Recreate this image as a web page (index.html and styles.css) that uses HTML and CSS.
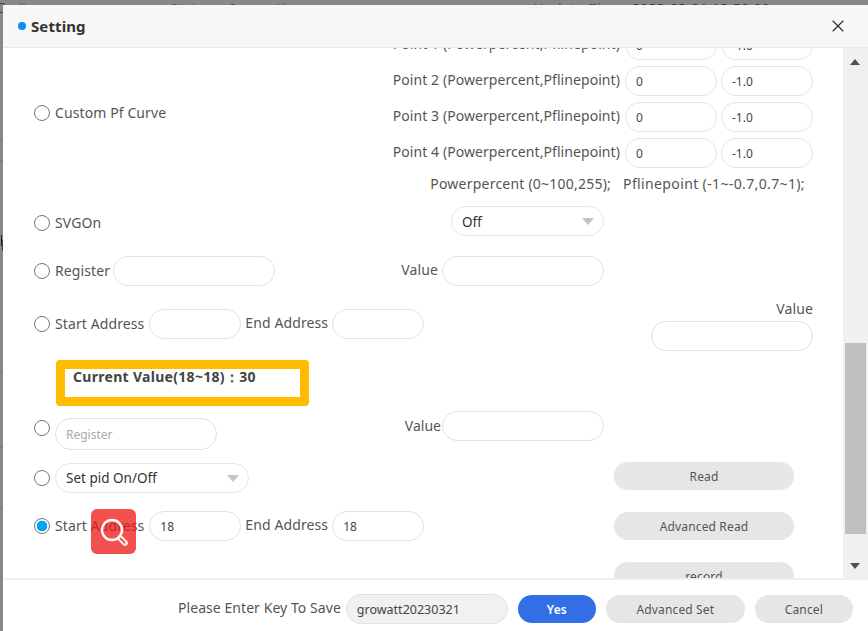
FILE: index.html
```html
<!DOCTYPE html>
<html lang="en">
<head>
<meta charset="utf-8">
<title>Setting</title>
<link rel="stylesheet" href="styles.css">
</head>
<body>
<div class="backdrop">
  <span class="bg-text bg-status">Status:</span>
  <span class="bg-text bg-conn">Connection</span>
  <span class="bg-text bg-update">Update Time:</span>
  <span class="bg-text bg-date">2023-03-21 13:50:00</span>
  <span class="bg-ring bg-ring-a"></span>
  <span class="bg-ring bg-ring-b"></span>
  <span class="bg-line bg-l1"></span>
  <span class="bg-line bg-l2"></span>
  <span class="bg-line bg-l3"></span>
  <span class="bg-line bg-l4"></span>
  <span class="bg-line bg-l5"></span>
  <span class="bg-glyph"></span>
</div>
<section class="modal">
  <header class="modal-head">
    <span class="dot"></span>
    <h1 class="title">Setting</h1>
    <svg class="close" viewBox="0 0 12 12" width="12" height="12"><path d="M.7.7l10.6 10.6M11.3.7L.7 11.3" fill="none" stroke="#333" stroke-width="1.3"/></svg>
  </header>
  <div class="modal-body">
    <div class="pane">
      <div class="content">
        <div class="row row-pf">
          <label class="opt"><input class="radio" type="radio" name="m"><span class="up1">Custom Pf Curve</span></label>
          <div class="points">
            <div class="point"><span>Point 1 (Powerpercent,Pflinepoint)</span><input class="field short" value="0"><input class="field short" value="-1.0"></div>
            <div class="point"><span>Point 2 (Powerpercent,Pflinepoint)</span><input class="field short" value="0"><input class="field short" value="-1.0"></div>
            <div class="point"><span>Point 3 (Powerpercent,Pflinepoint)</span><input class="field short" value="0"><input class="field short" value="-1.0"></div>
            <div class="point"><span>Point 4 (Powerpercent,Pflinepoint)</span><input class="field short" value="0"><input class="field short" value="-1.0"></div>
            <div class="note"><span class="note-a">Powerpercent (0~100,255);</span><span class="note-b">Pflinepoint (-1~-0.7,0.7~1);</span></div>
          </div>
        </div>

        <div class="row row-svg">
          <label class="opt"><input class="radio" type="radio" name="m"><span class="up1">SVGOn</span></label>
          <div class="select select-off"><span>Off</span></div>
        </div>

        <div class="row row-reg">
          <label class="opt"><input class="radio" type="radio" name="m"><span class="up1">Register</span><input class="field long"></label>
          <div class="pair"><span>Value</span><input class="field long"></div>
        </div>

        <div class="row row-addr">
          <label class="opt opt-addr"><input class="radio" type="radio" name="m"><span class="up1">Start Address</span><input class="field short"><span class="up2">End Address</span><input class="field short"></label>
          <div class="value-col"><span>Value</span><input class="field long"></div>
        </div>

        <div class="current"><strong>Current Value(18~18)：30</strong></div>

        <div class="split">
          <div class="left">
            <div class="row row-write">
              <div class="opt opt-write"><input class="radio" type="radio" name="m"><input class="field long tall" placeholder="Register"></div>
              <div class="pair pair-tight"><span>Value</span><input class="field long"></div>
            </div>
            <div class="opt row-pid"><input class="radio" type="radio" name="m"><div class="select select-pid"><span>Set pid On/Off</span></div></div>
            <div class="opt row-start"><input class="radio" type="radio" name="m" checked><span class="up1">Start Address</span><input class="field short" value="18"><span class="up2">End Address</span><input class="field short" value="18"></div>
          </div>
          <div class="actions">
            <button class="btn btn-side" type="button">Read</button>
            <button class="btn btn-side" type="button">Advanced Read</button>
            <button class="btn btn-side" type="button">record</button>
          </div>
        </div>
      </div>
    </div>
    <div class="scrollbar">
      <span class="arrow arrow-up"></span>
      <span class="thumb"></span>
      <span class="arrow arrow-down"></span>
    </div>
  </div>
  <footer class="modal-foot">
    <span>Please Enter Key To Save</span>
    <input class="field key" value="growatt20230321">
    <button class="btn btn-yes" type="button">Yes</button>
    <button class="btn btn-adv" type="button">Advanced Set</button>
    <button class="btn btn-cancel" type="button">Cancel</button>
  </footer>
</section>
<div class="search-badge">
  <svg viewBox="0 0 45 45" width="45" height="45"><circle cx="21" cy="21" r="10" fill="none" stroke="#fff" stroke-width="2.400"/><path d="M29 29l5 5" stroke="#fff" stroke-width="5.500" stroke-linecap="round"/><path d="M29.500 29.500l4.200 4.200" stroke="#f35052" stroke-width="2" stroke-linecap="round"/></svg>
</div>
</body>
</html>
```
FILE: styles.css
```css
* { box-sizing: border-box; }
html, body { margin: 0; height: 100%; overflow: hidden; }
body {
  background: #888;
  font-family: "Noto Sans", "Open Sans", sans-serif;
  font-size: 14px;
  letter-spacing: .1px;
  color: #555;
}

/* page behind the dialog */
.backdrop { position: absolute; inset: 0; overflow: hidden; }
.bg-text { position: absolute; top: -1px; font-size: 14px; line-height: 20px; color: #555; }
.bg-status { left: 170px; }
.bg-conn { left: 227px; color: #2e6b2e; }
.bg-update { left: 533px; letter-spacing: .6px; }
.bg-date { left: 632px; color: #333; letter-spacing: .3px; }
.bg-ring { position: absolute; top: 3px; width: 10px; height: 10px; border-radius: 50%; border: 1px solid #333; }
.bg-ring-a { left: -3px; }
.bg-ring-b { left: 17px; border-color: #4c7a3a; }
.bg-line { position: absolute; left: 0; width: 3px; height: 1px; background: #777; }
.bg-l1 { top: 139px; }
.bg-l2 { top: 160px; }
.bg-l3 { top: 371px; }
.bg-l4 { top: 447px; }
.bg-l5 { top: 508px; }
.bg-glyph { position: absolute; left: 1px; top: 235px; width: 1px; height: 11px; background: #222; box-shadow: 1px 5px 0 0 #444; }

/* dialog */
.modal {
  position: absolute;
  left: 3px; top: 5px;
  width: 870px; height: 630px;
  display: flex;
  flex-direction: column;
  background: #fff;
}
.modal-head {
  flex: none;
  height: 43px;
  display: flex;
  align-items: center;
  background: #f7f7f7;
  border-bottom: 1px solid #e8e8e8;
  padding-left: 15px;
}
.dot { width: 8px; height: 8px; border-radius: 50%; background: #0091ff; margin-right: 5px; }
.title { margin: 0; font-size: 15px; line-height: 20px; font-weight: 700; color: #333; }
.close { margin-left: auto; margin-right: 29px; }

.modal-body { flex: none; height: 530px; display: flex; }
.pane { flex: none; width: 840px; overflow: hidden; }
.content { margin-top: -18px; padding: 0 30px 0 31px; }

.row { display: flex; }
.opt { display: flex; align-items: center; }
.radio {
  appearance: none;
  flex: none;
  width: 16px; height: 16px;
  margin: 0 5px 0 0;
  border: 1px solid #767676;
  border-radius: 50%;
  background: #fff;
}
.radio:checked {
  background: radial-gradient(circle, #00a5f5 0 5px, #fff 5.600px);
}
.up1 { padding-bottom: 2px; }
.up2 { padding-bottom: 4px; }
.field {
  height: 30px;
  border: 1px solid #e2e2e2;
  border-radius: 15px;
  padding: 0 10px;
  font: 12px "Noto Sans", "Open Sans", sans-serif;
  color: #444;
  background: #fff;
  outline: none;
}
.field::placeholder { color: #aaa; }
.short { width: 92px; }
.long { width: 162px; }
.tall { height: 32px; border-radius: 16px; }

/* Custom Pf block */
.row-pf { align-items: center; justify-content: space-between; }
.points { display: flex; flex-direction: column; gap: 6px; align-items: flex-end; }
.point { display: flex; align-items: center; gap: 4px; height: 30px; }
.point span { padding-bottom: 4px; margin-right: 1px; letter-spacing: .07px; }
.note { display: flex; gap: 12px; height: 22px; align-items: center; padding: 0 8px 4px 0; }
.note-a { letter-spacing: .22px; }
.note-b { letter-spacing: .37px; }

.row-svg { margin-top: 10px; align-items: center; }
.row-svg .opt { width: 417px; padding-top: 4px; }
.select {
  position: relative;
  height: 30px;
  border: 1px solid #e6e6e6;
  border-radius: 15px;
  padding: 0 10px;
  display: flex;
  align-items: center;
  font-size: 13.500px;
  letter-spacing: 0;
  color: #333;
  background: #fff;
}
.select::after {
  content: "";
  position: absolute;
  right: 9px; top: 11px;
  border: 6px solid transparent;
  border-top: 7px solid #c4c4c4;
  border-bottom: 0;
}
.select-off { width: 153px; padding-top: 2px; }
.select-pid { width: 194px; }

.row-reg { margin-top: 20px; width: 570px; justify-content: space-between; }
.row-reg .opt span { margin-right: 3px; }
.pair { display: flex; align-items: center; gap: 4px; }
.pair span { padding-bottom: 4px; }
.pair-tight { gap: 1px; }
.pair-tight span { padding-bottom: 2px; letter-spacing: 0; }

.row-addr { margin-top: 14px; justify-content: space-between; align-items: flex-start; }
.opt-addr { margin-top: 9px; }
.opt-addr > span, .row-start > span { margin-right: 4px; }
.opt-addr > .up1, .row-start > .up1 { margin-right: 5px; }
.opt-addr > .field, .row-start > .field { margin-right: 4px; }
.value-col { display: flex; flex-direction: column; align-items: flex-end; width: 162px; }
.value-col span { line-height: 17px; margin-bottom: 4px; }

.current {
  margin: 9px 0 0 22px;
  width: 253px; height: 46px;
  border: 9px solid #ffbc00;
  border-radius: 4px;
  padding-left: 8px;
  line-height: 16px;
  color: #444;
}
.current strong { font-size: 14px; letter-spacing: .3px; }

.split { display: flex; margin-top: 5px; }
.left { width: 570px; flex: none; }
.row-write { justify-content: space-between; align-items: flex-start; }
.opt-write { margin-top: 7px; align-items: flex-start; }
.opt-write .radio { margin-top: 2px; }
.row-pid { margin-top: 13px; }
.row-start { margin-top: 18px; }
.actions { flex: none; width: 180px; margin: 51px 0 0 10px; display: flex; flex-direction: column; gap: 22px; }

.btn {
  height: 28px;
  border: 0;
  border-radius: 14px;
  padding: 0;
  font: 12px "Noto Sans", "Open Sans", sans-serif;
  letter-spacing: .15px;
  color: #555;
  background: #e6e6e6;
}

/* scrollbar */
.scrollbar { position: relative; flex: none; width: 27px; background: #f0f0f0; }
.thumb { position: absolute; left: 2px; top: 295px; width: 21px; height: 191px; background: #bfbfbf; }
.arrow { position: absolute; left: 7px; border: 5.500px solid transparent; border-top: 0; border-bottom: 6px solid #505050; }
.arrow-up { top: 11px; }
.arrow-down { top: 515px; transform: rotate(180deg); }

/* footer */
.modal-foot {
  flex: none;
  height: 57px;
  border-top: 2px solid #f0f0f0;
  padding: 14px 0 0 175px;
  display: flex;
  align-items: flex-start;
  gap: 10px;
  white-space: nowrap;
}
.modal-foot > span { line-height: 28px; margin-right: -5px; letter-spacing: .06px; }
.key { width: 162px; background: #f1f1f1; font-size: 12.500px; }
.btn-yes { width: 78px; margin-top: 1px; background: #326ee6; color: #fff; font-weight: 600; }
.btn-adv { width: 139px; margin-top: 1px; }
.btn-cancel { width: 98px; margin-top: 1px; }

/* floating tool */
.search-badge {
  position: absolute;
  left: 91px; top: 509px;
  width: 45px; height: 45px;
  border-radius: 6px;
  background: rgba(239, 21, 21, .75);
}
.search-badge svg { display: block; }
```
